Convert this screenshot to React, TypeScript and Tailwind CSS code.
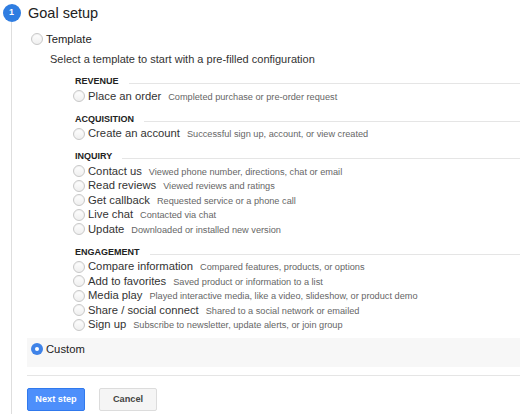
import React from 'react';

type Goal = { label: string; desc: string };
type Group = { title: string; goals: Goal[] };

const GROUPS: Group[] = [
  { title: 'REVENUE', goals: [{ label: 'Place an order', desc: 'Completed purchase or pre-order request' }] },
  { title: 'ACQUISITION', goals: [{ label: 'Create an account', desc: 'Successful sign up, account, or view created' }] },
  {
    title: 'INQUIRY',
    goals: [
      { label: 'Contact us', desc: 'Viewed phone number, directions, chat or email' },
      { label: 'Read reviews', desc: 'Viewed reviews and ratings' },
      { label: 'Get callback', desc: 'Requested service or a phone call' },
      { label: 'Live chat', desc: 'Contacted via chat' },
      { label: 'Update', desc: 'Downloaded or installed new version' },
    ],
  },
  {
    title: 'ENGAGEMENT',
    goals: [
      { label: 'Compare information', desc: 'Compared features, products, or options' },
      { label: 'Add to favorites', desc: 'Saved product or information to a list' },
      { label: 'Media play', desc: 'Played interactive media, like a video, slideshow, or product demo' },
      { label: 'Share / social connect', desc: 'Shared to a social network or emailed' },
      { label: 'Sign up', desc: 'Subscribe to newsletter, update alerts, or join group' },
    ],
  },
];

function Radio({ checked = false }: { checked?: boolean }) {
  if (checked) {
    return (
      <span className="w-[12px] h-[12px] shrink-0 rounded-full bg-[#3f83e8] flex items-center justify-center">
        <span className="w-[4px] h-[4px] rounded-full bg-white" />
      </span>
    );
  }
  return (
    <span className="w-[12px] h-[12px] shrink-0 rounded-full border border-[#c8c8c8] bg-gradient-to-b from-white to-[#efefef] shadow-[inset_0_1px_1px_rgba(0,0,0,0.06)]" />
  );
}

export default function App() {
  return (
    <div className="w-[520px] h-[414px] overflow-hidden bg-white flex gap-[4px] text-[#222] font-['Liberation_Sans',Arial,sans-serif]">
      <div className="w-[23px] shrink-0 flex flex-col items-center pt-[4px]">
        <div className="w-[18px] h-[18px] rounded-full bg-[#2f7de1] flex items-center justify-center text-white text-[9px] font-bold">
          1
        </div>
        <div className="w-px flex-1 bg-[#dedede]" />
      </div>

      <div className="flex-1 flex flex-col">
        <div className="h-[28px] flex items-center pl-px text-[14.5px]">Goal setup</div>

        <label className="h-[22px] flex items-center gap-[3px] pl-[4px] text-[11.25px]">
          <Radio />
          <span>Template</span>
        </label>

        <div className="h-[18px] flex items-center pl-[23px] text-[11px] text-[#333]">
          Select a template to start with a pre-filled configuration
        </div>

        <div className="pl-[46px] mt-[7px] flex flex-col gap-[9px]">
          {GROUPS.map((g) => (
            <div key={g.title} className="flex flex-col">
              <div className="h-[14px] flex items-center pl-[2px]">
                <span className="text-[9px] font-bold">{g.title}</span>
                <span className="flex-1 h-px bg-[#e5e5e5] ml-[10px] mt-[3px]" />
              </div>
              {g.goals.map((goal) => (
                <label key={goal.label} className="h-[14.5px] flex items-center gap-[3px] whitespace-nowrap">
                  <Radio />
                  <span className="flex items-baseline gap-[7px]">
                    <span className="text-[11.25px] text-[#333]">{goal.label}</span>
                    <span className="text-[9.2px] text-[#666]">{goal.desc}</span>
                  </span>
                </label>
              ))}
            </div>
          ))}
        </div>

        <label className="mt-[6px] h-[29px] bg-[#f7f7f7] flex items-start gap-[3px] pl-[4px] pt-[5px] text-[11.25px]">
          <Radio checked />
          <span className="leading-[12px]">Custom</span>
        </label>

        <div className="mt-[8px] h-px bg-[#e5e5e5]" />

        <div className="mt-[12px] flex gap-[14px]">
          <button className="w-[58px] h-[23px] rounded-[2px] border border-[#3079ed] bg-[#4d8ffb] text-white text-[9.2px] font-bold">
            Next step
          </button>
          <button className="w-[58px] h-[23px] rounded-[2px] border border-[#dcdcdc] bg-[#f5f5f5] text-[#444] text-[9.2px] font-bold">
            Cancel
          </button>
        </div>
      </div>
    </div>
  );
}
